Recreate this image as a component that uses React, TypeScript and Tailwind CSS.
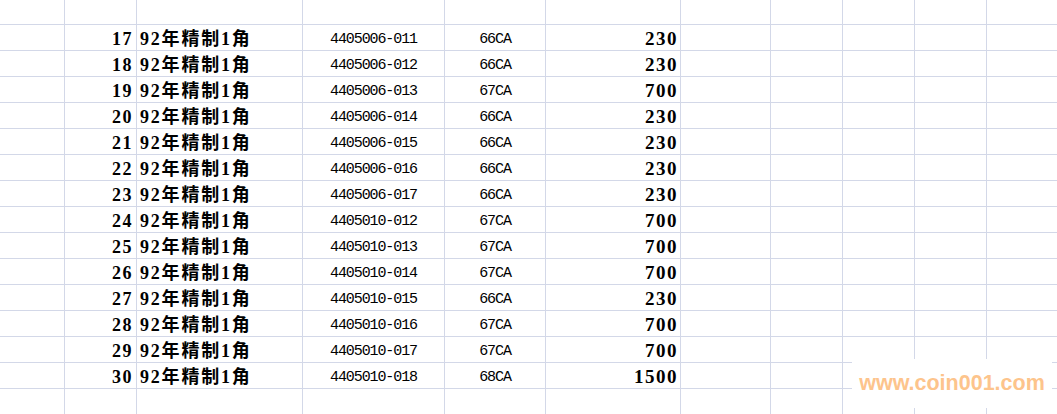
import React from "react";

const rows: [number, string, string, string][] = [
  [17, "4405006-011", "66CA", "230"],
  [18, "4405006-012", "66CA", "230"],
  [19, "4405006-013", "67CA", "700"],
  [20, "4405006-014", "66CA", "230"],
  [21, "4405006-015", "66CA", "230"],
  [22, "4405006-016", "66CA", "230"],
  [23, "4405006-017", "66CA", "230"],
  [24, "4405010-012", "67CA", "700"],
  [25, "4405010-013", "67CA", "700"],
  [26, "4405010-014", "67CA", "700"],
  [27, "4405010-015", "66CA", "230"],
  [28, "4405010-016", "67CA", "700"],
  [29, "4405010-017", "67CA", "700"],
  [30, "4405010-018", "68CA", "1500"],
];

const line = "border-[#d3d8e8]";

function EmptyCells() {
  return (
    <>
      <div className={`w-[90px] shrink-0 border-r ${line}`} />
      <div className={`w-[72px] shrink-0 border-r ${line}`} />
      <div className={`w-[72px] shrink-0 border-r ${line}`} />
      <div className={`w-[72px] shrink-0 border-r ${line}`} />
      <div className="flex-1" />
    </>
  );
}

function BlankRow({ h }: { h: string }) {
  return (
    <div className={`flex ${h} border-b ${line}`}>
      <div className={`w-[65px] shrink-0 border-r ${line}`} />
      <div className={`w-[72px] shrink-0 border-r ${line}`} />
      <div className={`w-[166px] shrink-0 border-r ${line}`} />
      <div className={`w-[142px] shrink-0 border-r ${line}`} />
      <div className={`w-[101px] shrink-0 border-r ${line}`} />
      <div className={`w-[135px] shrink-0 border-r ${line}`} />
      <EmptyCells />
    </div>
  );
}

const serif = "font-['Liberation_Serif','Noto_Sans_CJK_SC',serif]";
const mono = "font-['Liberation_Mono','Noto_Sans_CJK_SC',monospace]";

export default function App() {
  return (
    <div className="relative w-[1057px] h-[414px] overflow-hidden bg-white text-black">
      <BlankRow h="h-[25px]" />
      {rows.map(([n, code, grade, price]) => (
        <div key={n} className={`flex h-[26px] border-b ${line}`}>
          <div className={`w-[65px] shrink-0 border-r ${line}`} />
          <div
            className={`w-[72px] shrink-0 border-r ${line} flex items-end justify-end pr-[3px] pb-[2px] ${serif} font-bold text-[18px] leading-none tracking-[1.5px]`}
          >
            {n}
          </div>
          <div
            className={`w-[166px] shrink-0 border-r ${line} flex items-end pl-[3px] pb-[2px] ${serif} font-bold text-[18px] leading-none tracking-[1.8px] whitespace-nowrap`}
          >
            92年精制1角
          </div>
          <div
            className={`w-[142px] shrink-0 border-r ${line} flex items-end justify-center pb-[3px] ${mono} text-[15px] leading-none tracking-[-1.1px]`}
          >
            {code}
          </div>
          <div
            className={`w-[101px] shrink-0 border-r ${line} flex items-end justify-center pb-[3px] ${mono} text-[15px] leading-none tracking-[-1.1px]`}
          >
            {grade}
          </div>
          <div
            className={`w-[135px] shrink-0 border-r ${line} flex items-end justify-end pr-[2px] pb-[2px] ${serif} font-bold text-[19px] leading-none tracking-[1.5px]`}
          >
            {price}
          </div>
          <EmptyCells />
        </div>
      ))}
      <BlankRow h="h-[26px]" />
      <div className="absolute left-[852px] top-[359px] w-[200px] h-[49px] bg-white flex items-center justify-center">
        <span className="font-['Liberation_Sans',Arial,sans-serif] font-bold text-[21.5px] leading-none text-[#fdc48c]">
          www.coin001.com
        </span>
      </div>
    </div>
  );
}
